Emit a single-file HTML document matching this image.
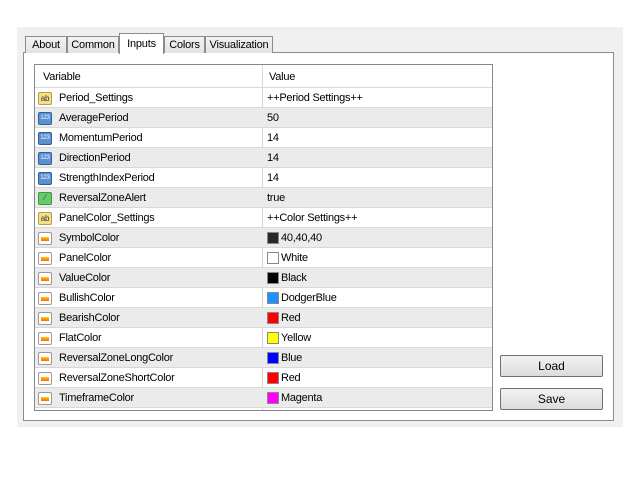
<!DOCTYPE html>
<html><head><style>
body{margin:0;width:640px;height:480px;background:#fff;font-family:"Liberation Sans",sans-serif;font-size:11px;color:#000;position:relative;overflow:hidden}
.panel{position:absolute;left:17px;top:27px;width:606px;height:400px;background:#f0f0f0}
.body{position:absolute;left:23px;top:52px;width:589px;height:367px;background:#fff;border:1px solid #898c95}
.tab{position:absolute;top:36px;height:16px;border:1px solid #898c95;border-bottom:none;background:linear-gradient(#f3f3f3,#e3e3e3);line-height:17px;text-align:center;letter-spacing:-0.2px}
.tab.sel{top:33px;height:20px;background:#fff;z-index:2;line-height:20px}
.tbl{position:absolute;left:34px;top:64px;width:457px;height:345px;border:1px solid #828790;background:#fff}
.row{position:absolute;left:0;width:457px;height:19px;border-bottom:1px solid #d8d8d8;line-height:21px;letter-spacing:-0.25px}
.row.g{background:#ebebeb}
.c1{position:absolute;left:24px}
.c2{position:absolute;left:232px}
.div{position:absolute;left:227px;top:0;width:1px;height:345px;background:#d8d8d8}
.ic{position:absolute;left:3px;top:4px;width:14px;height:13px;border-radius:2px}
.sw{position:absolute;left:232px;top:4px;width:10px;height:10px;border:1px solid #888}
.btn{position:absolute;left:500px;width:101px;height:20px;border:1px solid #707070;border-radius:2px;background:linear-gradient(#f2f2f2,#dcdcdc);text-align:center;line-height:21px;font-size:12px}
</style></head><body>
<div class="panel"></div>
<div class="body"></div>
<div class="tab" style="left:25px;width:40px">About</div>
<div class="tab" style="left:67px;width:50px">Common</div>
<div class="tab sel" style="left:119px;width:43px">Inputs</div>
<div class="tab" style="left:164px;width:39px">Colors</div>
<div class="tab" style="left:205px;width:66px">Visualization</div>
<div class="tbl">
<div class="row" style="top:0;height:22px;line-height:25px;background:#fff"><span style="position:absolute;left:8px">Variable</span><span style="position:absolute;left:234px">Value</span></div>
<div class="div"></div>
<div id="rows"></div>
</div>
<div class="btn" style="top:355px">Load</div>
<div class="btn" style="top:388px">Save</div>
<script>
var d=[["ab","Period_Settings","++Period Settings++"],["n","AveragePeriod","50"],["n","MomentumPeriod","14"],["n","DirectionPeriod","14"],["n","StrengthIndexPeriod","14"],["b","ReversalZoneAlert","true"],["ab","PanelColor_Settings","++Color Settings++"],["c","SymbolColor","40,40,40","#282828"],["c","PanelColor","White","#fff"],["c","ValueColor","Black","#000"],["c","BullishColor","DodgerBlue","#1e90ff"],["c","BearishColor","Red","#f00"],["c","FlatColor","Yellow","#ff0"],["c","ReversalZoneLongColor","Blue","#00f"],["c","ReversalZoneShortColor","Red","#f00"],["c","TimeframeColor","Magenta","#f0f"]];
var h="";
d.forEach(function(r,i){
var ic="";
if(r[0]=="ab")ic='<div class="ic" style="background:#f3e08a;border:1px solid #b9a040;width:12px;height:11px;font-size:8px;line-height:11px;text-align:center;color:#333">ab</div>';
else if(r[0]=="n")ic='<div class="ic" style="background:#5a8fd0;border:1px solid #3060a0;width:12px;height:11px;font-size:6px;line-height:11px;text-align:center;color:#fff">123</div>';
else if(r[0]=="b")ic='<div class="ic" style="background:#6cc86c;border:1px solid #3a9a3a;width:12px;height:11px;font-size:8px;line-height:10px;text-align:center;color:#063">⁄</div>';
else ic='<div class="ic" style="background:#fff;border:1px solid #999;width:12px;height:11px"><div style="position:absolute;left:2px;top:4px;width:8px;height:4px;background:linear-gradient(#fc0,#f60)"></div></div>';
var sw=r[3]?'<div class="sw" style="background:'+r[3]+'"></div>':"";
var x=r[3]?'style="left:246px"':"";
h+='<div class="row'+(i%2?" g":"")+'" style="top:'+(23+20*i)+'px">'+ic+'<span class="c1">'+r[1]+'</span>'+sw+'<span class="c2" '+x+'>'+r[2]+'</span></div>';
});
document.getElementById("rows").innerHTML=h;
</script>
</body></html>
